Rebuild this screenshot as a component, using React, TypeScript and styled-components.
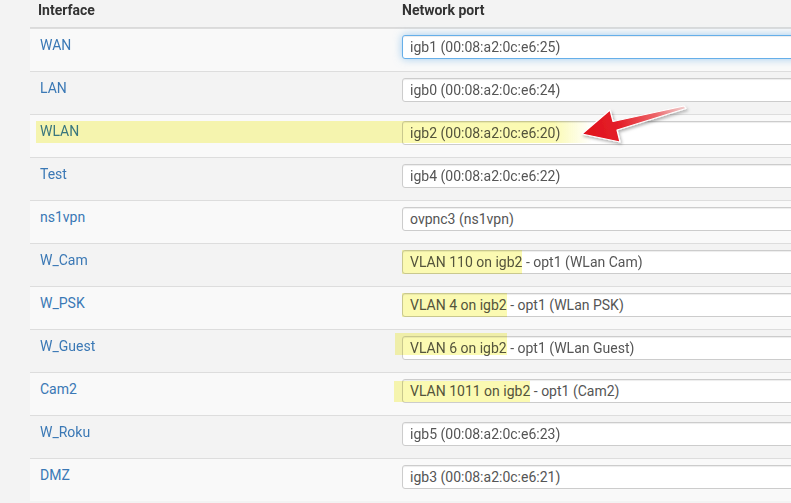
import React from "react";
import styled, { createGlobalStyle } from "styled-components";

const GlobalStyle = createGlobalStyle`
  html, body {
    margin: 0;
    padding: 0;
    background: #f3f3f3;
    overflow: hidden;
  }
  body {
    font-family: Roboto, "Liberation Sans", Arial, sans-serif;
    font-size: 14px;
    color: #333;
  }
`;

const Page = styled.div`
  width: 791px;
  height: 503px;
  overflow: hidden;
  padding-left: 30px;
  box-sizing: border-box;
`;

const Table = styled.div`
  width: 900px;
`;

const HeaderRow = styled.div`
  display: grid;
  grid-template-columns: 364px 1fr;
  border-bottom: 1px solid #dadada;
`;

const HeaderCell = styled.div`
  padding: 0 8px 7px;
  line-height: 20px;
  font-weight: 700;
  color: #333;
`;

const Row = styled.div<{ $striped: boolean }>`
  position: relative;
  display: grid;
  grid-template-columns: 364px 1fr;
  height: 42px;
  border-top: 1px solid #dddddd;
  background: ${(p) => (p.$striped ? "#f9f9f9" : "transparent")};
`;

const LabelCell = styled.div`
  padding: 6px 10px 0;
  line-height: 20px;
`;

const IfLink = styled.a`
  color: #3a78b5;
  text-decoration: none;
`;

const PortCell = styled.div`
  padding: 6px 8px 0;
`;

const Select = styled.div<{ $focus?: boolean }>`
  display: flex;
  align-items: stretch;
  width: 440px;
  height: 24px;
  box-sizing: border-box;
  padding: 0 7px;
  background: #fff;
  border: 1px solid ${(p) => (p.$focus ? "#66afe9" : "#cccccc")};
  border-radius: 3px;
  box-shadow: ${(p) =>
    p.$focus
      ? "inset 0 1px 1px rgba(0,0,0,.075), 0 0 8px rgba(102,175,233,.6)"
      : "inset 0 1px 1px rgba(0,0,0,.075)"};
  color: #555;
  line-height: 22px;
  white-space: pre;
`;

const Mark = styled.span<{ $ext: number; $top: number; $bottom: number }>`
  position: relative;
  margin-left: -7px;
  padding-left: 7px;
  &::before {
    content: "";
    position: absolute;
    left: ${(p) => -p.$ext}px;
    right: 0;
    top: ${(p) => p.$top}px;
    bottom: ${(p) => p.$bottom}px;
    background: #fbfab2;
    mix-blend-mode: multiply;
    pointer-events: none;
  }
`;

const Band = styled.div`
  position: absolute;
  left: 6px;
  top: 6px;
  width: 556px;
  height: 22px;
  background: linear-gradient(
    90deg,
    #fbfab2 0%,
    #fbfab2 93%,
    rgba(251, 250, 178, 0) 100%
  );
  mix-blend-mode: multiply;
  pointer-events: none;
`;

const ArrowSvg = styled.svg`
  position: absolute;
  left: 545px;
  top: -15px;
  overflow: visible;
  pointer-events: none;
`;

type Entry = {
  name: string;
  port?: string;
  mark?: string;
  rest?: string;
  ext?: number;
  top?: number;
  bottom?: number;
  focus?: boolean;
  band?: boolean;
};

const rows: Entry[] = [
  { name: "WAN", port: "igb1 (00:08:a2:0c:e6:25)", focus: true },
  { name: "LAN", port: "igb0 (00:08:a2:0c:e6:24)" },
  { name: "WLAN", port: "igb2 (00:08:a2:0c:e6:20)", band: true },
  { name: "Test", port: "igb4 (00:08:a2:0c:e6:22)" },
  { name: "ns1vpn", port: "ovpnc3 (ns1vpn)" },
  { name: "W_Cam", mark: "VLAN 110 on igb2", rest: " - opt1 (WLan Cam)", ext: 1, top: -1, bottom: -1 },
  { name: "W_PSK", mark: "VLAN 4 on igb2", rest: " - opt1 (WLan PSK)", ext: 1, top: -1, bottom: -1 },
  { name: "W_Guest", mark: "VLAN 6 on igb2", rest: " - opt1 (WLan Guest)", ext: 8, top: -4, bottom: 4 },
  { name: "Cam2", mark: "VLAN 1011 on igb2", rest: " - opt1 (Cam2)", ext: 9, top: 1, bottom: 0 },
  { name: "W_Roku", port: "igb5 (00:08:a2:0c:e6:23)" },
  { name: "DMZ", port: "igb3 (00:08:a2:0c:e6:21)" },
];

const Arrow = () => (
  <ArrowSvg width={124} height={48} viewBox="0 0 124 48">
    <defs>
      <linearGradient id="arrowFill" gradientUnits="userSpaceOnUse" x1="8" y1="34" x2="112" y2="8">
        <stop offset="0" stopColor="#e0101a" />
        <stop offset="0.35" stopColor="#e4202a" />
        <stop offset="0.7" stopColor="#ed6468" />
        <stop offset="1" stopColor="#f6c2c2" stopOpacity="0.6" />
      </linearGradient>
      <filter id="arrowShadow" x="-20%" y="-40%" width="140%" height="180%">
        <feDropShadow dx="1.5" dy="2" stdDeviation="1.4" floodColor="#000" floodOpacity="0.3" />
      </filter>
    </defs>
    <path
      d="M7 34 L35 10 L38 21.5 L109 6 L111 8.5 L42 30 L45 42 Z"
      fill="url(#arrowFill)"
      stroke="#ffffff"
      strokeWidth={1.2}
      strokeLinejoin="round"
      filter="url(#arrowShadow)"
    />
  </ArrowSvg>
);

export default function App() {
  return (
    <Page>
      <GlobalStyle />
      <Table>
        <HeaderRow>
          <HeaderCell>Interface</HeaderCell>
          <HeaderCell>Network port</HeaderCell>
        </HeaderRow>
        {rows.map((r, i) => (
          <Row key={r.name} $striped={i % 2 === 0}>
            <LabelCell>
              <IfLink href="#">{r.name}</IfLink>
            </LabelCell>
            <PortCell>
              <Select $focus={r.focus}>
                {r.mark ? (
                  <>
                    <Mark $ext={r.ext ?? 1} $top={r.top ?? -1} $bottom={r.bottom ?? -1}>
                      {r.mark}
                    </Mark>
                    <span>{r.rest}</span>
                  </>
                ) : (
                  <span>{r.port}</span>
                )}
              </Select>
            </PortCell>
            {r.band && <Band />}
            {r.band && <Arrow />}
          </Row>
        ))}
      </Table>
    </Page>
  );
}
